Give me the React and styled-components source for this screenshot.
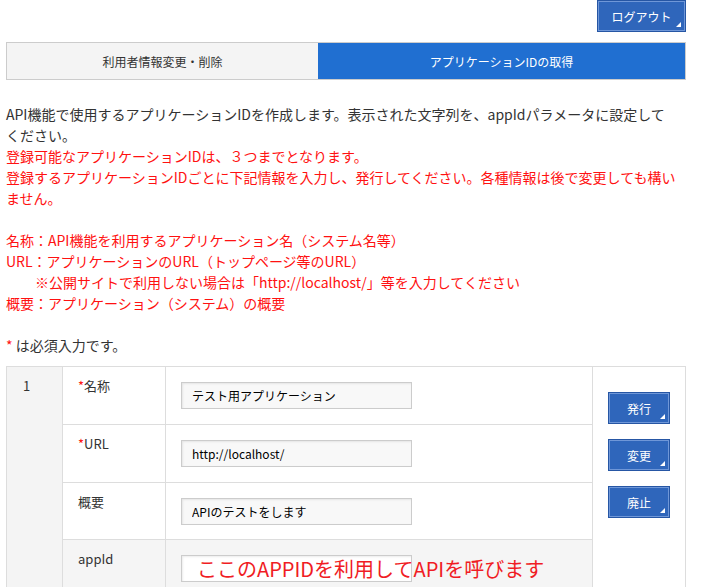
import React from 'react';
import styled, { createGlobalStyle } from 'styled-components';

const GlobalStyle = createGlobalStyle`
  body {
    margin: 0;
    background: #fff;
    font-family: "Noto Sans CJK JP", "Noto Sans", "Liberation Sans", sans-serif;
    color: #333;
  }
`;

export default function App() {
  return (
    <>
      <GlobalStyle />
      <Page>
        <Header>
          <BlueButton $w={89} $h={32}>ログアウト</BlueButton>
        </Header>

        <Tabs>
          <Tab>利用者情報変更・削除</Tab>
          <Tab $active>アプリケーションIDの取得</Tab>
        </Tabs>

        <Intro>
          <p>
            API機能で使用するアプリケーションIDを作成します。表示された文字列を、appIdパラメータに設定して
            <br />
            ください。
          </p>
          <Red>登録可能なアプリケーションIDは、３つまでとなります。</Red>
          <Red>
            登録するアプリケーションIDごとに下記情報を入力し、発行してください。各種情報は後で変更しても構いません。
          </Red>
          <Blank />
          <Red>名称：API機能を利用するアプリケーション名（システム名等）</Red>
          <Red>URL：アプリケーションのURL（トップページ等のURL）</Red>
          <Red $indent>※公開サイトで利用しない場合は「http://localhost/」等を入力してください</Red>
          <Red>概要：アプリケーション（システム）の概要</Red>
          <Blank />
          <p>
            <Star>*</Star> は必須入力です。
          </p>
        </Intro>

        <AppTable>
          <colgroup>
            <col style={{ width: 56 }} />
            <col style={{ width: 103 }} />
            <col style={{ width: 427 }} />
            <col style={{ width: 93 }} />
          </colgroup>
          <tbody>
            <Row $h={58}>
              <NumCell rowSpan={4}>1</NumCell>
              <LabelCell><Star>*</Star>名称</LabelCell>
              <FieldCell>
                <Field defaultValue="テスト用アプリケーション" />
              </FieldCell>
              <ActionCell rowSpan={4}>
                <Actions>
                  <BlueButton $w={62} $h={32}>発行</BlueButton>
                  <BlueButton $w={62} $h={32}>変更</BlueButton>
                  <BlueButton $w={62} $h={32}>廃止</BlueButton>
                </Actions>
              </ActionCell>
            </Row>
            <Row $h={58}>
              <LabelCell><Star>*</Star>URL</LabelCell>
              <FieldCell>
                <Field defaultValue="http://localhost/" />
              </FieldCell>
            </Row>
            <Row $h={57}>
              <LabelCell>概要</LabelCell>
              <FieldCell>
                <Field defaultValue="APIのテストをします" />
              </FieldCell>
            </Row>
            <Row $h={58} $gray>
              <LabelCell>appId</LabelCell>
              <FieldCell>
                <Field $plain readOnly defaultValue="" />
                <Note>ここのAPPIDを利用してAPIを呼びます</Note>
              </FieldCell>
            </Row>
          </tbody>
        </AppTable>
      </Page>
    </>
  );
}

const Page = styled.div`
  width: 680px;
  margin-left: 6px;
  position: relative;
`;

const Header = styled.div`
  display: flex;
  justify-content: flex-end;
`;

const BlueButton = styled.button`
  position: relative;
  width: ${(p) => p.$w}px;
  height: ${(p) => p.$h}px;
  padding: 0;
  background: #2f66bb;
  border: 1px solid #2656a4;
  box-shadow: inset 0 0 0 1px #6f97d8;
  color: #fff;
  font-family: "Noto Sans CJK JP", sans-serif;
  font-size: 12px;
  cursor: pointer;

  &::after {
    content: '';
    position: absolute;
    right: 4px;
    bottom: 4px;
    width: 0;
    height: 0;
    border-left: 5px solid transparent;
    border-bottom: 5px solid #fff;
  }
`;

const Tabs = styled.div`
  display: flex;
  margin-top: 10px;
  height: 38px;
  border: 1px solid #ccc;
  box-sizing: border-box;
  width: 680px;
`;

const Tab = styled.div`
  flex: ${(p) => (p.$active ? '0 0 367px' : '1')};
  display: flex;
  align-items: center;
  justify-content: center;
  font-size: 12px;
  background: ${(p) => (p.$active ? '#206fd1' : '#f4f4f4')};
  color: ${(p) => (p.$active ? '#fff' : '#333')};
`;

const Intro = styled.div`
  margin-top: 24px;
  width: 680px;
  font-size: 14px;
  line-height: 21px;

  p {
    margin: 0;
  }
`;

const Red = styled.p`
  color: #ff1111;
  padding-left: ${(p) => (p.$indent ? '29px' : '0')};
`;

const Blank = styled.div`
  height: 21px;
`;

const Star = styled.span`
  color: #ff1111;
`;

const AppTable = styled.table`
  margin-top: 10px;
  border-collapse: collapse;
  table-layout: fixed;
  width: 680px;

  td {
    border: 1px solid #ddd;
    vertical-align: top;
    box-sizing: border-box;
  }
`;

const Row = styled.tr`
  height: ${(p) => p.$h}px;
  background: ${(p) => (p.$gray ? '#f5f5f5' : '#fff')};
`;

const NumCell = styled.td`
  background: #f4f4f4;
  font-size: 13px;
  padding: 9px 0 0 16px;
`;

const LabelCell = styled.td`
  font-size: 13px;
  padding: 9px 0 0 15px;
  color: #333;
`;

const FieldCell = styled.td`
  position: relative;
  padding: 15px 0 0 15px;
`;

const Field = styled.input`
  display: block;
  box-sizing: border-box;
  width: 231px;
  height: 27px;
  padding: 0 10px;
  border: 1px solid #ccc;
  background: ${(p) => (p.$plain ? '#fff' : '#f8f8f8')};
  box-shadow: inset 1px 1px 2px rgba(0, 0, 0, 0.08);
  font-family: "Noto Sans CJK JP", sans-serif;
  font-size: 12px;
  color: #000;
`;

const Note = styled.div`
  position: absolute;
  left: 31px;
  top: 16px;
  font-size: 20px;
  line-height: 26px;
  color: #f01c24;
  white-space: nowrap;
`;

const ActionCell = styled.td`
  background: #fff;
  padding: 25px 0 0 15px;
`;

const Actions = styled.div`
  display: flex;
  flex-direction: column;
  gap: 15px;
`;
